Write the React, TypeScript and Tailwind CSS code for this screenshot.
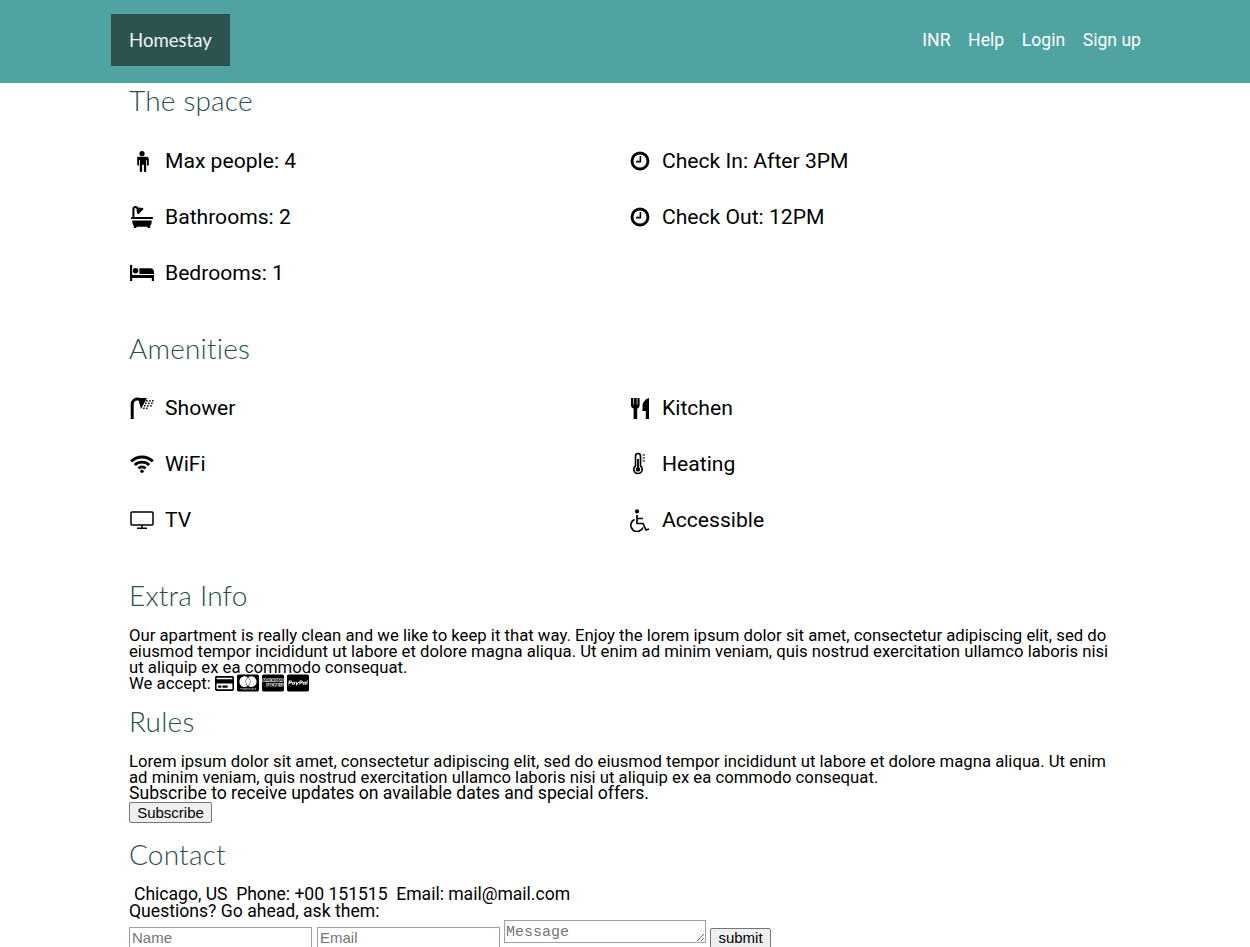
import { FaBath, FaCcAmex, FaCcMastercard, FaCcPaypal, FaRegCreditCard } from "react-icons/fa";
import type { ReactNode } from "react";

function Male() {
  return (
    <svg viewBox="0 0 14 21" className="w-[14px] h-[21px]" fill="black">
      <circle cx="7" cy="2.600" r="2.600" />
      <path d="M2.600 5.800h8.800a2.400 2.400 0 0 1 2.400 2.400v5.600a.9.9 0 0 1-1.800 0V8.900h-.8v11a1.100 1.100 0 0 1-2.300 0v-6.200H7.100v6.200a1.100 1.100 0 0 1-2.300 0v-11H4v4.900a.9.9 0 0 1-1.800 0V8.200a2.400 2.400 0 0 1 .4-2.400z" />
    </svg>
  );
}

function Bed() {
  return (
    <svg viewBox="0 0 24 16" className="w-[24px] h-[16px]" fill="black">
      <path d="M0 0h2.200v10H24v6h-2.200v-3H2.200v3H0z" />
      <circle cx="5.600" cy="5.800" r="2.700" />
      <path d="M9.400 3.200H20a4 4 0 0 1 4 4V9H9.400z" />
    </svg>
  );
}

function Clock() {
  return (
    <svg viewBox="0 0 20 20" className="w-[20px] h-[20px] ml-px" fill="none" stroke="black">
      <circle cx="10" cy="10" r="8" strokeWidth="2.800" />
      <path d="M10.400 5v5.600H6" strokeWidth="1.600" />
    </svg>
  );
}

function Shower() {
  const dots = [
    [16, 3], [19, 3], [22, 3], [15, 5.500], [18, 5.500], [21, 5.500], [14, 8], [17, 8], [20, 8], [13, 10.500], [16, 10.500],
  ];
  return (
    <svg viewBox="0 0 24 22" className="w-[24px] h-[22px]" fill="black">
      <path d="M2.200 22V7a5 5 0 0 1 5-5h2" fill="none" stroke="black" strokeWidth="3" />
      <path d="M8 1h9l-6 11z" />
      {dots.map(([x, y]) => (
        <rect key={`${x}-${y}`} x={x} y={y} width="1.700" height="1.600" fill="#222" />
      ))}
    </svg>
  );
}

function Wifi() {
  return (
    <svg viewBox="0 0 24 18" className="w-[24px] h-[18px]" fill="none" stroke="black" strokeWidth="2.900">
      <path d="M1.200 6.400a15.500 15.500 0 0 1 21.600 0" />
      <path d="M4.800 10a10.400 10.400 0 0 1 14.400 0" />
      <path d="M8.400 13.400a5.400 5.400 0 0 1 7.200 0" />
      <circle cx="12" cy="16.300" r="1.700" fill="black" stroke="none" />
    </svg>
  );
}

function Tv() {
  return (
    <svg viewBox="0 0 24 18" className="w-[24px] h-[18px]" fill="none" stroke="black" strokeWidth="1.500">
      <rect x="1" y="1" width="22" height="13" rx="1" />
      <path d="M12 14v3M7 17.200h10" />
    </svg>
  );
}

function Cutlery() {
  return (
    <svg viewBox="0 0 18 21" className="w-[18px] h-[21px] ml-px" fill="black">
      <path d="M0 0h2.200v6.500h.7V0h2.800v6.500h.7V0h2.200v7.500c0 1.600-1.200 2.600-2.400 3V21H2.600V10.500C1.200 10.100 0 9.100 0 7.500z" />
      <path d="M18 0c-3.500 1-6.500 4-6.500 8v5h3.300v8H18z" />
    </svg>
  );
}

function Thermometer() {
  return (
    <svg viewBox="0 0 16 24" className="w-[16px] h-[24px]" fill="none" stroke="black">
      <path d="M4.500 14V4a2.500 2.500 0 0 1 5 0v10a4.200 4.200 0 1 1-5 0z" strokeWidth="1.600" />
      <circle cx="7" cy="17.400" r="2.200" fill="black" stroke="none" />
      <path d="M7 7v9" strokeWidth="1.800" />
      <path d="M11.500 3h2.500M11.500 6h2.500M11.500 9h2.500" strokeWidth="1.100" />
    </svg>
  );
}

function Wheelchair() {
  return (
    <svg viewBox="0 0 22 23" className="w-[22px] h-[23px]" fill="none" stroke="black">
      <circle cx="9" cy="2.400" r="2.100" fill="black" stroke="none" />
      <path d="M9 6v8.500h6l3 6.500 3-1" strokeWidth="1.700" />
      <path d="M9 9.500h6" strokeWidth="1.500" />
      <path d="M6.500 10.500a6.300 6.300 0 1 0 8.500 8" strokeWidth="1.600" />
    </svg>
  );
}

function Feature({ icon, label }: { icon: ReactNode; label: string }) {
  return (
    <div className="flex items-center h-[56px] text-[21.12px]">
      <span className="w-[36px] flex justify-center pr-[10px]">{icon}</span>
      <span>{label}</span>
    </div>
  );
}

function Heading({ children, className }: { children: ReactNode; className: string }) {
  return <h2 className={`font-['Lato',sans-serif] font-light text-[28px] tracking-[0.2px] h-[36px] leading-[34px] text-[#2a4f4c] ${className}`}>{children}</h2>;
}

export default function App() {
  return (
    <div className="h-[947px] overflow-hidden bg-white text-black font-['Roboto',sans-serif] text-[17.6px] leading-[16px]">
      {/* navbar */}
      <header className="bg-[#4fa3a1] h-[83px] pl-[111px] pr-[109px] pt-[14px] flex justify-between">
        <a className="w-[119px] h-[52px] bg-[#2d5350] text-[#eef6f5] flex items-center pl-[18px] font-['Lato',sans-serif] text-[18.6px]">Homestay</a>
        <nav className="flex items-center gap-[17.6px] h-[52px] text-white text-[17.6px]">
          <a>INR</a>
          <a>Help</a>
          <a>Login</a>
          <a>Sign up</a>
        </nav>
      </header>

      <main className="pl-[129px] pr-[127px]">
        <Heading className="mt-0">The space</Heading>
        <div className="grid grid-cols-2 mt-[14px]">
          <div>
            <Feature icon={<Male />} label="Max people: 4" />
            <Feature icon={<FaBath className="w-[22px] h-[22px]" />} label="Bathrooms: 2" />
            <Feature icon={<Bed />} label="Bedrooms: 1" />
          </div>
          <div>
            <Feature icon={<Clock />} label="Check In: After 3PM" />
            <Feature icon={<Clock />} label="Check Out: 12PM" />
          </div>
        </div>

        <Heading className="mt-[30px]">Amenities</Heading>
        <div className="grid grid-cols-2 mt-[13px]">
          <div>
            <Feature icon={<Shower />} label="Shower" />
            <Feature icon={<Wifi />} label="WiFi" />
            <Feature icon={<Tv />} label="TV" />
          </div>
          <div>
            <Feature icon={<Cutlery />} label="Kitchen" />
            <Feature icon={<Thermometer />} label="Heating" />
            <Feature icon={<Wheelchair />} label="Accessible" />
          </div>
        </div>

        <Heading className="mt-[30px]">Extra Info</Heading>
        <p className="mt-[13px] w-[980px] text-[16.72px]">
          Our apartment is really clean and we like to keep it that way. Enjoy the lorem ipsum dolor sit amet, consectetur adipiscing elit, sed do eiusmod tempor incididunt ut labore et dolore magna aliqua. Ut enim ad minim veniam, quis nostrud exercitation ullamco laboris nisi ut aliquip ex ea commodo consequat.
        </p>
        <p className="flex items-center h-[16px] text-[16.72px]">
          We accept:
          <FaRegCreditCard className="ml-[4px] w-[19px] h-[19px]" />
          <FaCcMastercard className="ml-[3px] w-[22px] h-[22px]" />
          <FaCcAmex className="ml-[3px] w-[22px] h-[22px]" />
          <FaCcPaypal className="ml-[3px] w-[22px] h-[22px]" />
        </p>

        <Heading className="mt-[13px]">Rules</Heading>
        <p className="mt-[13px] w-[980px] text-[16.72px]">
          Lorem ipsum dolor sit amet, consectetur adipiscing elit, sed do eiusmod tempor incididunt ut labore et dolore magna aliqua. Ut enim ad minim veniam, quis nostrud exercitation ullamco laboris nisi ut aliquip ex ea commodo consequat.
        </p>
        <p>Subscribe to receive updates on available dates and special offers.</p>
        <button className="block h-[21px] w-[83px] mt-[1px] bg-[#efefef] border border-[#767676] rounded-[2px] font-['Liberation_Sans',sans-serif] text-[15px] leading-[16px]">Subscribe</button>

        <Heading className="mt-[14px]">Contact</Heading>
        <p className="mt-[13px] pl-[5px] whitespace-pre tracking-[-0.03px]">Chicago, US  Phone: +00 151515  Email: mail@mail.com</p>
        <p className="mt-[1px]">Questions? Go ahead, ask them:</p>
        <form className="mt-[1px] flex items-start gap-[4px]">
          <input placeholder="Name" className="mt-[7px] w-[183px] h-[24px] px-[2px] pb-[3px] border border-[#a0a0a0] placeholder:text-[#757575] font-['Liberation_Sans',sans-serif] text-[15px]" />
          <input placeholder="Email" className="mt-[7px] ml-[1px] w-[183px] h-[24px] px-[2px] pb-[3px] border border-[#a0a0a0] placeholder:text-[#757575] font-['Liberation_Sans',sans-serif] text-[15px]" />
          <textarea placeholder="Message" className="w-[202px] h-[23px] pl-[1px] pr-[2px] py-[3px] border border-[#a0a0a0] placeholder:text-[#757575] font-['Liberation_Mono',monospace] text-[15px] leading-[17px]" />
          <button type="button" className="mt-[8px] w-[61px] h-[24px] pb-[4px] bg-[#efefef] border border-[#767676] rounded-[2px] font-['Liberation_Sans',sans-serif] text-[15px] leading-[16px]">submit</button>
        </form>
      </main>
    </div>
  );
}
